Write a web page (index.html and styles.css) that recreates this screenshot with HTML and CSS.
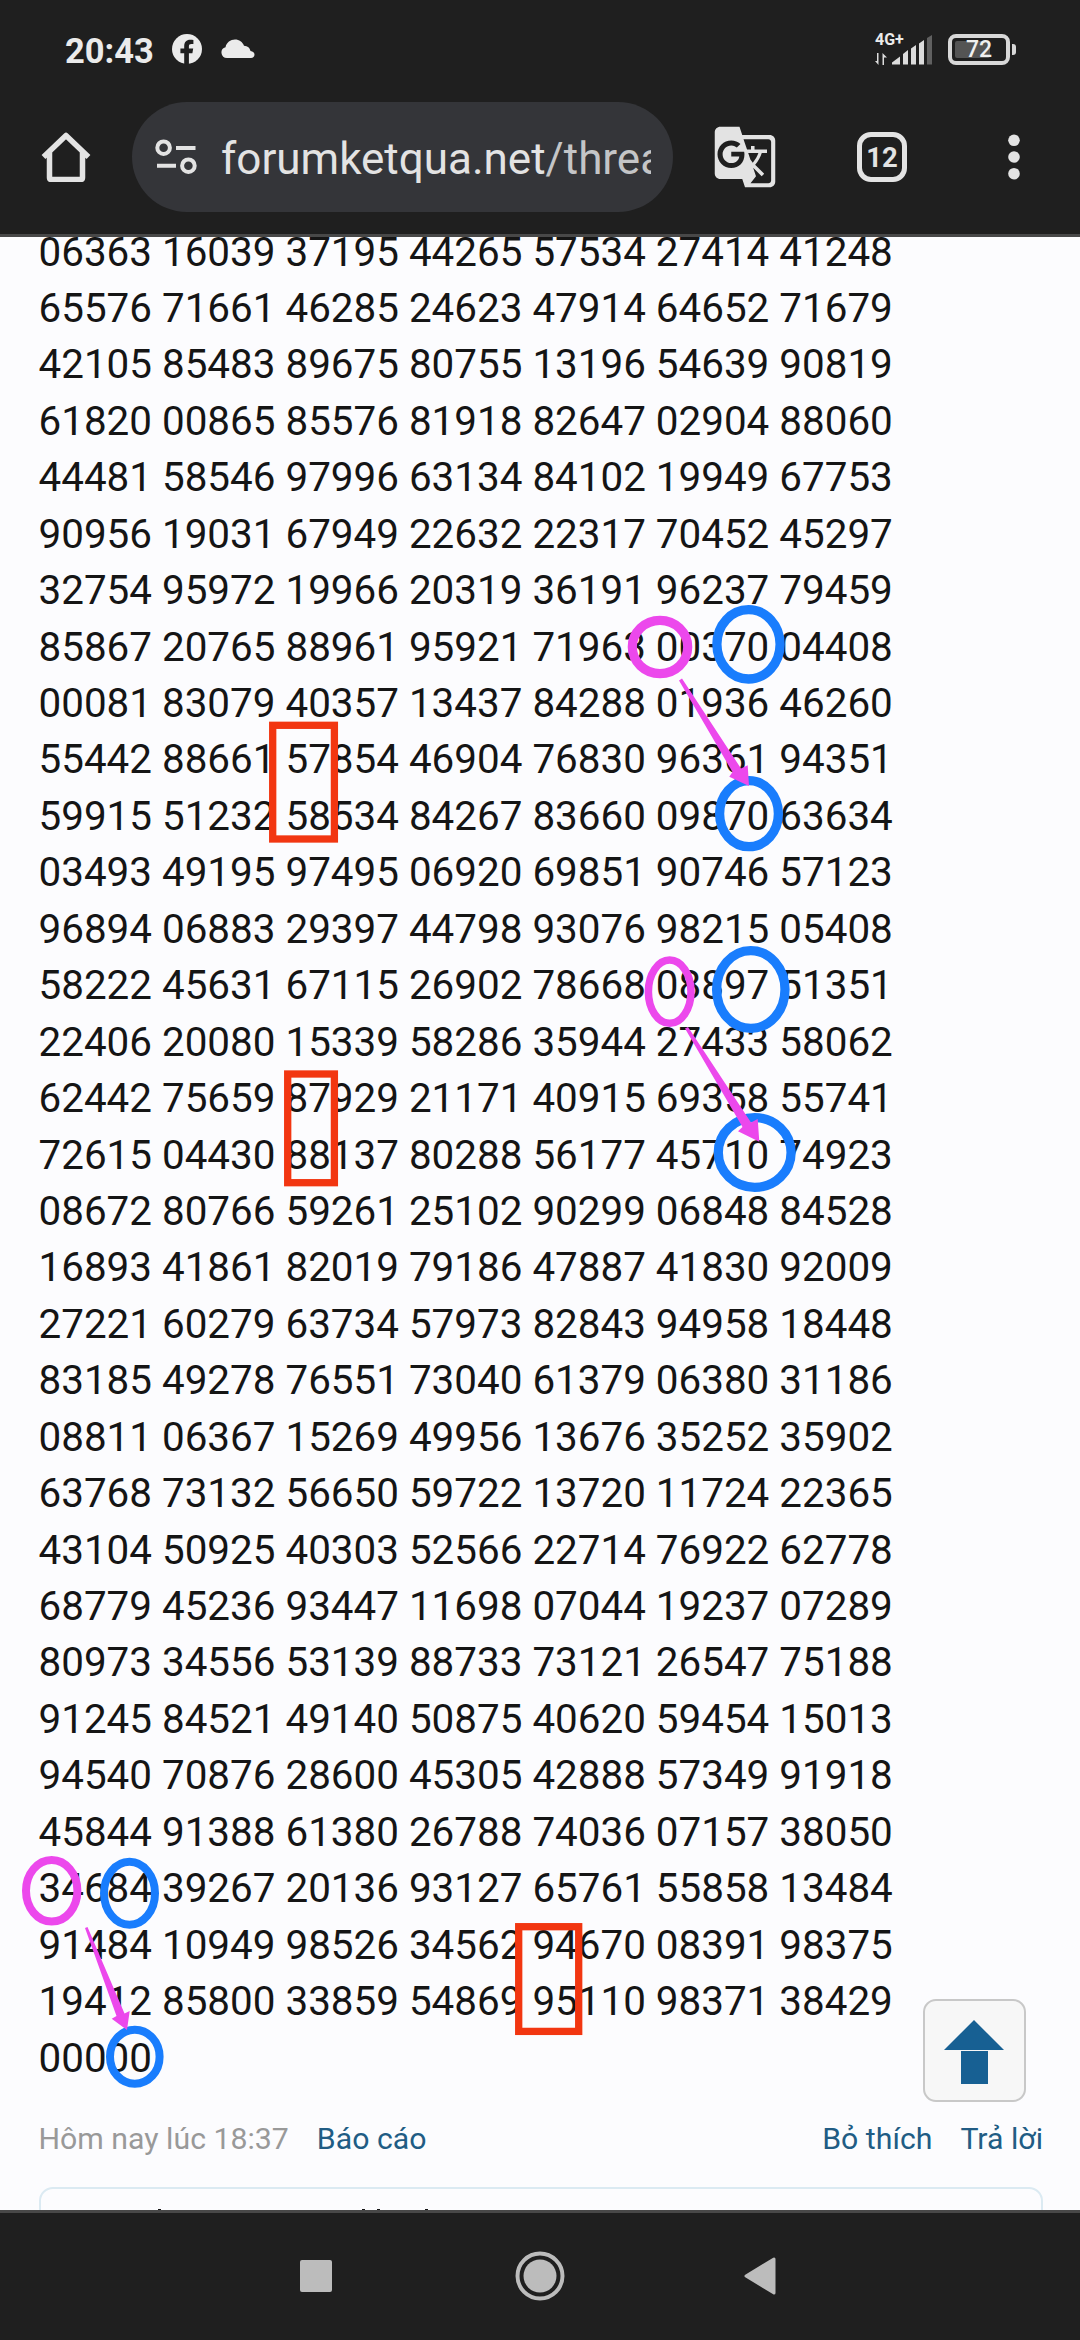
FILE: index.html
```html
<!DOCTYPE html>
<html lang="vi">
<head>
<meta charset="utf-8">
<title>forumketqua.net</title>
<link rel="stylesheet" href="styles.css">
</head>
<body>
<div class="screen">
  <header class="top">
    <div class="status">
      <span class="time">20:43</span>
      <svg class="fb" viewBox="0 0 30 30"><circle cx="15" cy="15" r="15" fill="#ebebeb"/><path d="M12.2 30V19.2H8.4v-4.6h3.8v-2.4c0-4.2 2.2-6.4 6-6.4 1.2 0 2.2.1 3.2.3v4h-2c-1.800 0-2.500.8-2.500 2.300v2.200h4.300l-.8 4.600h-3.500V30z" fill="#1f1f1f"/></svg>
      <svg class="cloud" viewBox="0 0 34 20"><path d="M6 19a5.500 5.500 0 0 1-1.500-10.800C5.500 3.500 9.500.5 14 .5c4.300 0 7.500 2.500 9 6.200 3.600.1 6 2.300 6.500 5.300 2.500.2 4 1.700 4 3.600 0 2-1.500 3.400-3.500 3.400z" fill="#ebebeb"/></svg>
      <div class="network">
        <div class="data"><span class="gen">4G+</span>
          <svg class="updown" viewBox="0 0 13 12"><path d="M3.500 0v12L0 8h2V0zM7.500 12V0l4.500 4.500H9V12z" fill="#dcdcdc"/></svg>
        </div>
        <svg class="bars" viewBox="0 0 40 30"><g fill="#dcdcdc"><path d="M0 29.500v-2L8 21.500v8zM11 19l5-4v14.500h-5zM19 13.500l5-3.500v19.500h-5zM27 8.500l5-3.500v24.500h-5z"/></g><path d="M35 3l5-3v29.500h-5z" fill="#606060"/></svg>
      </div>
      <div class="battery"><i class="charge"></i><span class="pct">72</span></div><i class="nub"></i>
    </div>
    <div class="toolbar">
      <svg class="home" viewBox="0 0 50 50"><path d="M2.500 25L25 3.500 47.500 25M8.500 20v25.500q0 2 2 2h29q2 0 2-2V20" fill="none" stroke="#e3e3e3" stroke-width="5.500" stroke-linejoin="round"/></svg>
      <div class="omnibox">
        <svg class="tune" viewBox="0 0 42 36"><g fill="none" stroke="#e3e3e3" stroke-width="4"><circle cx="8.600" cy="8.700" r="6.300"/><circle cx="33.400" cy="26.700" r="6.300"/><path d="M21 9h19.500M2 26.800h19"/></g></svg>
        <div class="url">forumketqua.net<span class="path">/threa</span></div>
      </div>
      <svg class="translate" viewBox="0 0 24 24"><path fill="#e3e3e3" d="M21 4H11l-1-3H3c-1.100 0-2 .9-2 2v15c0 1.100.9 2 2 2h8l1 3h9c1.100 0 2-.9 2-2V6c0-1.100-.9-2-2-2zM7 16c-2.760 0-5-2.240-5-5s2.240-5 5-5c1.350 0 2.480.5 3.350 1.300L9.030 8.570c-.38-.36-1.040-.78-2.030-.78-1.740 0-3.150 1.440-3.150 3.210S5.260 14.210 7 14.210c2.010 0 2.840-1.440 2.920-2.410H7v-1.710h4.680c.07.31.12.61.12 1.020C11.800 13.970 9.890 16 7 16zm6.170-5.420h3.700c-.43 1.250-1.110 2.430-2.050 3.470-.31-.35-.6-.72-.86-1.100l-.79-2.370zm8.330 9.920c0 .55-.45 1-1 1H14l2-2.500-1.040-3.100 3.100 3.100.92-.92-3.300-3.250.02-.02c1.130-1.250 1.930-2.690 2.400-4.220H20v-1.300h-4.530V8h-1.290v1.290h-1.440L11.460 5.500h9.040c.55 0 1 .45 1 1v14z"/></svg>
      <div class="tabs">12</div>
      <svg class="more" viewBox="0 0 12 46"><g fill="#e3e3e3"><circle cx="6" cy="6.300" r="5.800"/><circle cx="6" cy="23" r="5.800"/><circle cx="6" cy="39.700" r="5.800"/></g></svg>
    </div>
  </header>
  <main class="page">
    <pre class="numbers">06363 16039 37195 44265 57534 27414 41248
65576 71661 46285 24623 47914 64652 71679
42105 85483 89675 80755 13196 54639 90819
61820 00865 85576 81918 82647 02904 88060
44481 58546 97996 63134 84102 19949 67753
90956 19031 67949 22632 22317 70452 45297
32754 95972 19966 20319 36191 96237 79459
85867 20765 88961 95921 71963 00370 04408
00081 83079 40357 13437 84288 01936 46260
55442 88661 57854 46904 76830 96361 94351
59915 51232 58534 84267 83660 09870 63634
03493 49195 97495 06920 69851 90746 57123
96894 06883 29397 44798 93076 98215 05408
58222 45631 67115 26902 78668 08897 51351
22406 20080 15339 58286 35944 27433 58062
62442 75659 87929 21171 40915 69358 55741
72615 04430 88137 80288 56177 45710 74923
08672 80766 59261 25102 90299 06848 84528
16893 41861 82019 79186 47887 41830 92009
27221 60279 63734 57973 82843 94958 18448
83185 49278 76551 73040 61379 06380 31186
08811 06367 15269 49956 13676 35252 35902
63768 73132 56650 59722 13720 11724 22365
43104 50925 40303 52566 22714 76922 62778
68779 45236 93447 11698 07044 19237 07289
80973 34556 53139 88733 73121 26547 75188
91245 84521 49140 50875 40620 59454 15013
94540 70876 28600 45305 42888 57349 91918
45844 91388 61380 26788 74036 07157 38050
34684 39267 20136 93127 65761 55858 13484
91484 10949 98526 34562 94670 08391 98375
19412 85800 33859 54869 95110 98371 38429
00000</pre>
    <div class="meta">
      <span class="date">Hôm nay lúc 18:37</span><a class="report">Báo cáo</a>
      <a class="unlike">Bỏ thích</a><a class="reply">Trả lời</a>
    </div>
    <div class="likes"><svg class="tips" viewBox="0 0 270 2"><path d="M0 0h3v2H0zM204 0h3v2h-3zM219 0h3v2h-3zM267 0h3v2h-3z" fill="#151515"/></svg></div>
  </main>
  <nav class="nav">
    <i class="recent"></i>
    <svg class="homekey" viewBox="0 0 50 50"><circle cx="25" cy="25" r="22.500" fill="none" stroke="#bcbcbc" stroke-width="4"/><circle cx="25" cy="25" r="16.500" fill="#bcbcbc"/></svg>
    <svg class="back" viewBox="0 0 32 38"><path d="M2 19L30 2v34z" fill="#bcbcbc" stroke="#bcbcbc" stroke-width="3" stroke-linejoin="round"/></svg>
  </nav>
  <div class="totop"><svg viewBox="0 0 60 64"><path d="M30 0l30 30H0zM17 31h27v33H17z" fill="#176093"/></svg></div>
  <svg class="marks" viewBox="0 0 1080 2340">
    <g fill="none" stroke="#f23611" stroke-width="7.300">
      <rect x="272.700" y="725.300" width="61.700" height="113.700"/>
      <rect x="287.700" y="1074" width="46.700" height="108.700"/>
      <rect x="518.700" y="1926.700" width="60" height="104.700"/>
    </g>
    <g fill="none" stroke="#197dfd" stroke-width="9.300">
      <ellipse cx="748.500" cy="644.300" rx="31.600" ry="34.700"/>
      <ellipse cx="749" cy="813.700" rx="29.400" ry="33"/>
      <ellipse cx="750.800" cy="989.500" rx="34.200" ry="38.900"/>
      <ellipse cx="754.700" cy="1152.500" rx="36.400" ry="34.900"/>
      <ellipse cx="129.500" cy="1893.200" rx="25.500" ry="31.500" stroke-width="8"/>
      <ellipse cx="134.800" cy="2056.700" rx="24.800" ry="27" stroke-width="8"/>
    </g>
    <g fill="none" stroke="#ec48ec" stroke-width="8">
      <ellipse cx="660" cy="647" rx="27.700" ry="26.700" stroke-width="9.200"/>
      <ellipse cx="669.700" cy="991.700" rx="21.300" ry="31.600" stroke-width="7.500"/>
      <ellipse cx="51.700" cy="1890.800" rx="25.700" ry="30.800"/>
    </g>
    <g fill="#ec48ec">
      <path d="M679 680.500L682 678.500 741 768.500 747.700 765.300 749 786 729.300 776.700 732.500 772z"/>
      <path d="M685 1028.500L688 1027 751 1122.500 757.700 1119 759.300 1141.700 738 1131.300 742.500 1127z"/>
      <path d="M85 1928L87.500 1927 124.500 2013.500 129.700 2011 127 2030 111.700 2018.700 116.500 2016z"/>
    </g>
  </svg>
</div>
</body>
</html>
```
FILE: styles.css
```css
* { box-sizing: border-box; }
body { margin: 0; background: #fcfcfe; font-family: Roboto, "Noto Sans", sans-serif; }
.screen { position: relative; width: 1080px; height: 2340px; overflow: hidden; display: flex; flex-direction: column; }
svg { display: block; flex: none; }
.top { height: 237px; flex: none; background: #1f1f1f; border-bottom: 3px solid #484848; }
.status { height: 102px; padding: 0 64px 4px 65px; display: flex; align-items: center; }
.time { width: 107px; font-size: 34.500px; font-weight: 700; color: #ebebeb; line-height: 40px; margin-top: 3px; }
.fb { width: 30px; height: 30px; }
.cloud { width: 34px; height: 20px; margin-left: 19px; margin-top: -1px; }
.network { margin-left: auto; display: flex; align-items: flex-end; height: 31px; }
.data { width: 17px; height: 31px; display: flex; flex-direction: column; justify-content: space-between; }
.gen { font-size: 16px; line-height: 12px; font-weight: 700; color: #ebebeb; white-space: nowrap; }
.updown { width: 13px; height: 12px; }
.bars { width: 40px; height: 30px; }
.battery { width: 62px; height: 31px; margin-left: 16px; border: 4px solid #d8d8d8; border-radius: 8px; padding: 3px; display: grid; align-items: center; }
.charge { grid-area: 1 / 1; width: 35px; height: 17px; background: #545454; border-radius: 2px; }
.pct { grid-area: 1 / 1; font-size: 23px; line-height: 17px; font-weight: 500; color: #f0f0f0; text-align: center; }
.nub { width: 4px; height: 11px; margin-left: 2px; background: #d8d8d8; border-radius: 0 3px 3px 0; }
.toolbar { height: 110px; display: flex; align-items: center; padding-left: 41px; }
.home { width: 50px; height: 50px; }
.omnibox { width: 541px; height: 110px; margin-left: 41px; border-radius: 55px; background: #343539; display: flex; align-items: center; padding-left: 23px; }
.tune { width: 42px; height: 36px; }
.url { margin-left: 24px; width: 430px; overflow: hidden; white-space: nowrap; font-size: 44px; line-height: 56px; color: #e3e3e3; margin-top: 4px; }
.path { color: #c4c5c7; }
.translate { width: 66px; height: 66px; margin-left: 39px; }
.tabs { width: 50px; height: 50px; margin-left: 79px; border: 5.500px solid #e3e3e3; border-radius: 14px; color: #e3e3e3; font-size: 27.500px; line-height: 41px; font-weight: 700; text-align: center; }
.more { width: 12px; height: 46px; margin-left: 101px; }
.page { height: 1973px; flex: none; overflow: hidden; padding: 0 37px 0 38.500px; }
.numbers { margin: -12.500px 0 0; font: 40.380px/56.440px Roboto, sans-serif; color: #151515; }
.meta { height: 40px; margin-top: 32px; font-size: 30.250px; line-height: 40px; color: #999; display: flex; }
.meta a { color: #215c84; }
.report { margin-left: 28px; }
.unlike { margin-left: auto; }
.reply { margin-left: 28px; }
.likes { height: 80px; margin-top: 28px; border: 2px solid #dbeaf2; border-radius: 14px; padding: 20px 0 0 117.500px; }
.tips { width: 270px; height: 2px; }
.nav { flex: 1; background: #1f1f1f; border-top: 3px solid #484848; display: flex; align-items: center; padding: 0 0 2px 300px; }
.recent { width: 32px; height: 32px; border-radius: 2px; background: #bcbcbc; }
.homekey { width: 50px; height: 50px; margin-left: 183px; }
.back { width: 32px; height: 38px; margin-left: 179px; }
.totop { position: absolute; left: 923px; top: 1999px; width: 103px; height: 103px; border: 2px solid #c8c8c8; border-radius: 13px; background: #f7f7f7; padding: 19px 0 0 19px; }
.totop svg { width: 60px; height: 64px; }
.marks { position: absolute; left: 0; top: 0; width: 1080px; height: 2340px; }
```
